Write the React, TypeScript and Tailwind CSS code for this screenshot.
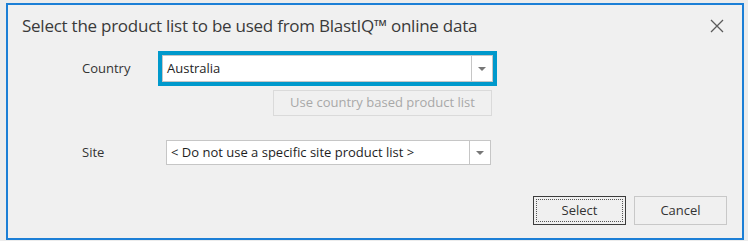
import React from 'react';

const Arrow = () => (
    <svg width="8" height="4" viewBox="0 0 8 4">
        <path d="M0 0h8L4 4z" fill="#777" />
    </svg>
);

const Combo = ({ value, className }: { value: string; className: string }) => (
    <div className={`flex h-[25px] bg-white border border-[#c6c6c6] ${className}`}>
        <div className="flex-1 flex items-center pl-[4px] text-[13px] text-[#1e1e1e] truncate">{value}</div>
        <div className="w-[21px] border-l border-[#c6c6c6] flex items-center justify-center">
            <Arrow />
        </div>
    </div>
);

export default function App() {
    return (
        <div className="w-[748px] h-[241px] bg-[#ececec] pt-[3px] pl-[6px] font-['Segoe_UI','Open_Sans',sans-serif]">
            <div className="w-[738px] h-[237px] border-2 border-[#1c7fd6] bg-[#f0f0f0] flex flex-col">
                {/* title */}
                <div className="flex items-center justify-between h-[40px] pl-[14px] pr-[18px] pt-[2px]">
                    <span className="text-[17px] text-[#3a3a3a] tracking-[-0.25px]">
                        Select the product list to be used from BlastIQ™ online data
                    </span>
                    <svg width="14" height="14" viewBox="0 0 14 14">
                        <path d="M1 1l12 12M13 1L1 13" stroke="#5a5a5a" strokeWidth="1.3" />
                    </svg>
                </div>

                {/* country */}
                <div className="flex items-center mt-[6px]">
                    <span className="w-[150px] pl-[74px] text-[13px] text-[#333]">Country</span>
                    <div className="border-[4px] border-[#0099cc]">
                        <Combo value="Australia" className="w-[331px] h-[27px] border-[#bdbdbd]" />
                    </div>
                </div>
                <div className="flex ml-[265px] mt-[4px]">
                    <div className="w-[219px] h-[26px] border border-[#dadada] flex items-center justify-center text-[13px] text-[#a8a8a8]">
                        Use country based product list
                    </div>
                </div>

                {/* site */}
                <div className="flex items-center mt-[24px]">
                    <span className="w-[158px] pl-[74px] text-[13px] text-[#333]">Site</span>
                    <Combo value="< Do not use a specific site product list >" className="w-[325px]" />
                </div>

                {/* buttons */}
                <div className="flex justify-end gap-[8px] mt-[31px] pr-[15px]">
                    <div className="w-[93px] h-[29px] border border-[#3c3c3c] p-[2px]">
                        <div className="w-full h-full border border-dotted border-[#555] flex items-center justify-center text-[13px] text-[#333]">
                            Select
                        </div>
                    </div>
                    <div className="w-[93px] h-[29px] border border-[#c8c8c8] flex items-center justify-center text-[13px] text-[#333]">
                        Cancel
                    </div>
                </div>
            </div>
        </div>
    );
}
